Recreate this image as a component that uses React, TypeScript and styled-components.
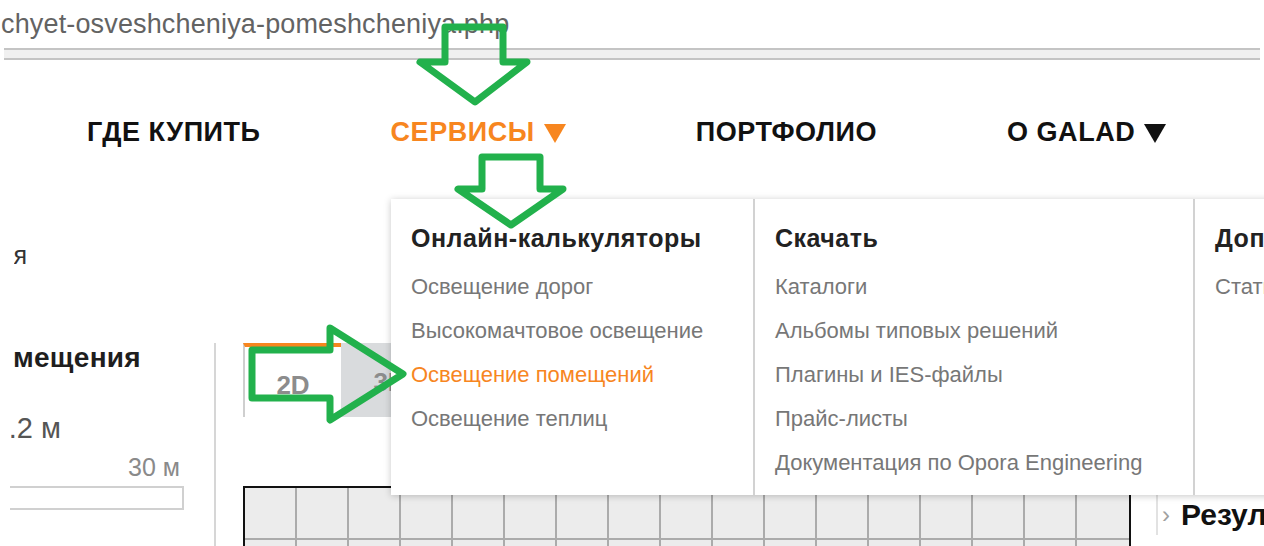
import React from "react";
import styled, { createGlobalStyle } from "styled-components";

const GlobalStyle = createGlobalStyle`
  html, body {
    margin: 0;
    padding: 0;
    background: #ffffff;
  }
  body {
    font-family: "Liberation Sans", Arial, sans-serif;
  }
  * { box-sizing: border-box; }
`;

const ORANGE = "#f7861f";
const GREEN = "#22b14c";

const Page = styled.div`
  position: relative;
  width: 1264px;
  height: 546px;
  overflow: hidden;
  background: #fff;
`;

/* ---------- address line + scroll rule ---------- */
const AddressLine = styled.div`
  height: 48px;
  padding-top: 8px;
  padding-left: 4px;
  white-space: nowrap;
  overflow: hidden;
`;

const AddressText = styled.span`
  display: block;
  font-size: 27px;
  letter-spacing: 0.15px;
  line-height: 32px;
  color: #636363;
  margin-left: -3px;
`;

const ScrollRule = styled.div`
  height: 12px;
  margin: 0 4px;
  background: #f0f0f0;
  border-top: 2px solid #c4c4c4;
  border-bottom: 2px solid #c4c4c4;
`;

/* ---------- main navigation ---------- */
const Nav = styled.nav`
  height: 144px;
  display: flex;
  align-items: center;
  gap: 130px;
  padding-left: 87px;
`;

const NavItem = styled.a<{ $active?: boolean }>`
  display: flex;
  align-items: center;
  gap: 9px;
  font-size: 27px;
  font-weight: 700;
  letter-spacing: 0.55px;
  line-height: 30px;
  color: ${(p) => (p.$active ? ORANGE : "#111")};
  text-decoration: none;
  white-space: nowrap;
`;

const Caret = styled.span<{ $color: string }>`
  display: inline-block;
  width: 0;
  height: 0;
  border-left: 11px solid transparent;
  border-right: 11px solid transparent;
  border-top: 19px solid ${(p) => p.$color};
  margin-top: 2px;
`;

/* ---------- page body; its left part is scrolled out of view ---------- */
const Crumb = styled.div`
  height: 139px;
  padding-top: 36px;
  display: flex;
`;

/* a line of which only the tail between x = left and x = right is seen */
const ClippedLine = styled.div<{ $left: number; $right: number }>`
  margin-left: ${(p) => p.$left}px;
  width: ${(p) => p.$right - p.$left}px;
  overflow: hidden;
  display: flex;
  justify-content: flex-end;
  white-space: nowrap;
`;

const CrumbText = styled.span`
  font-size: 25px;
  line-height: 30px;
  color: #333;
`;

const Main = styled.div`
  display: flex;
  align-items: flex-start;
`;

const Sidebar = styled.aside`
  width: 214px;
  flex: none;
  display: flex;
  flex-direction: column;
`;

const SideTitle = styled.span`
  font-size: 28px;
  font-weight: 700;
  letter-spacing: 0.3px;
  line-height: 30px;
  color: #1e1e1e;
`;

const FieldValue = styled.span`
  font-size: 29px;
  line-height: 30px;
  color: #555;
`;

const RangeMax = styled.div`
  width: 180px;
  text-align: right;
  font-size: 25px;
  line-height: 24px;
  color: #8a8a8a;
`;

const RangeTrack = styled.div`
  width: 174px;
  margin-left: 10px;
  height: 24px;
  border: 2px solid #d0d0d0;
  border-left: none;
  background: #fff;
`;

const Workspace = styled.section`
  width: 942px;
  flex: none;
  align-self: stretch;
  min-height: 220px;
  border-left: 2px solid #d6d6d6;
  padding-left: 27px;
  display: flex;
  flex-direction: column;
`;

const Tabs = styled.div`
  display: flex;
  height: 74px;
  flex: none;
`;

const Tab = styled.div<{ $active?: boolean }>`
  width: 98px;
  display: flex;
  align-items: center;
  justify-content: center;
  font-size: 26px;
  font-weight: 700;
  color: #8c8c8c;
  background: ${(p) => (p.$active ? "#fff" : "#d9dbdd")};
  border-top: 4px solid ${(p) => (p.$active ? ORANGE : "#d9dbdd")};
  border-left: ${(p) => (p.$active ? "2px solid #cfcfcf" : "none")};
  padding-top: ${(p) => (p.$active ? "6px" : "0")};
`;

const Grid = styled.div`
  flex: none;
  margin-top: 69px;
  display: grid;
  grid-template-columns: repeat(17, 52px);
  grid-auto-rows: 52px;
  width: max-content;
  border-top: 2px solid #111;
  border-left: 2px solid #111;
  border-right: 2px solid #111;
  background: #ececec;
`;

const Cell = styled.div<{ $last?: boolean }>`
  border-right: ${(p) => (p.$last ? "none" : "2px solid #ababab")};
  border-bottom: 2px solid #ababab;
`;

const Results = styled.section`
  margin-top: 152px;
  border-left: 2px solid #e2e2e2;
  padding-left: 4px;
  display: flex;
  align-items: center;
  gap: 11px;
  height: 40px;
  white-space: nowrap;
`;

const Chevron = styled.span`
  font-size: 24px;
  color: #a0a0a0;
  line-height: 30px;
`;

const ResultsTitle = styled.span`
  font-size: 30px;
  font-weight: 700;
  color: #111;
  line-height: 30px;
`;

/* ---------- services mega menu ---------- */
const MegaMenu = styled.div`
  position: absolute;
  left: 391px;
  top: 199px;
  width: 1000px;
  height: 296px;
  background: #fff;
  box-shadow: 0 1px 7px rgba(0, 0, 0, 0.22);
  display: flex;
`;

const MenuColumn = styled.div<{ $width: number; $divider?: boolean }>`
  width: ${(p) => p.$width}px;
  flex: none;
  padding: 24px 20px 0;
  border-right: ${(p) => (p.$divider ? "2px solid #d2d2d2" : "none")};
`;

const MenuHeading = styled.div`
  font-size: 25px;
  font-weight: 700;
  letter-spacing: 0.5px;
  line-height: 30px;
  color: #222;
  margin-bottom: 12px;
  white-space: nowrap;
`;

const MenuLink = styled.a<{ $current?: boolean }>`
  display: block;
  font-size: 22px;
  line-height: 44px;
  color: ${(p) => (p.$current ? ORANGE : "#777")};
  text-decoration: none;
  white-space: nowrap;
`;

/* ---------- hand-drawn pointer arrows ---------- */
const Pointers = styled.svg`
  position: absolute;
  left: 0;
  top: 0;
  pointer-events: none;
`;

const Arrow = styled.polygon`
  fill: none;
  stroke: ${GREEN};
  stroke-width: 7;
  stroke-linejoin: round;
`;

const menuColumns = [
  {
    title: "Онлайн-калькуляторы",
    width: 364,
    divider: true,
    links: [
      "Освещение дорог",
      "Высокомачтовое освещение",
      "Освещение помещений",
      "Освещение теплиц",
    ],
    current: 2,
  },
  {
    title: "Скачать",
    width: 440,
    divider: true,
    links: [
      "Каталоги",
      "Альбомы типовых решений",
      "Плагины и IES-файлы",
      "Прайс-листы",
      "Документация по Opora Engineering",
    ],
    current: -1,
  },
  {
    title: "Дополнительно",
    width: 196,
    divider: false,
    links: ["Статьи"],
    current: -1,
  },
];

export default function App() {
  return (
    <>
      <GlobalStyle />
      <Page>
        <AddressLine>
          <AddressText>chyet-osveshcheniya-pomeshcheniya.php</AddressText>
        </AddressLine>
        <ScrollRule />

        <Nav>
          <NavItem href="#">ГДЕ КУПИТЬ</NavItem>
          <NavItem href="#" $active>
            СЕРВИСЫ
            <Caret $color={ORANGE} />
          </NavItem>
          <NavItem href="#">ПОРТФОЛИО</NavItem>
          <NavItem href="#">
            О GALAD
            <Caret $color="#111" />
          </NavItem>
        </Nav>

        <Crumb>
          <ClippedLine $left={14} $right={27}>
            <CrumbText>Расчет освещения помещения</CrumbText>
          </ClippedLine>
        </Crumb>

        <Main>
          <Sidebar>
            <ClippedLine $left={14} $right={141}>
              <SideTitle>Параметры помещения</SideTitle>
            </ClippedLine>
            <ClippedLine $left={11} $right={61} style={{ marginTop: 40 }}>
              <FieldValue>Высота: 3.2 м</FieldValue>
            </ClippedLine>
            <RangeMax style={{ marginTop: 12 }}>30 м</RangeMax>
            <RangeTrack style={{ marginTop: 7 }} />
          </Sidebar>

          <Workspace>
            <Tabs>
              <Tab $active>2D</Tab>
              <Tab>3D</Tab>
            </Tabs>
            <Grid>
              {Array.from({ length: 17 * 3 }, (_, i) => (
                <Cell key={i} $last={i % 17 === 16} />
              ))}
            </Grid>
          </Workspace>

          <Results>
            <Chevron>›</Chevron>
            <ResultsTitle>Результаты</ResultsTitle>
          </Results>
        </Main>

        <MegaMenu>
          {menuColumns.map((col) => (
            <MenuColumn key={col.title} $width={col.width} $divider={col.divider}>
              <MenuHeading>{col.title}</MenuHeading>
              {col.links.map((label, i) => (
                <MenuLink key={label} href="#" $current={i === col.current}>
                  {label}
                </MenuLink>
              ))}
            </MenuColumn>
          ))}
        </MegaMenu>

        <Pointers width={1264} height={546} viewBox="0 0 1264 546">
          <Arrow points="445,27 503,27 503,62 527,62 475,102 420,62 445,62" />
          <Arrow points="482,157 540,157 540,189 563,189 511,225 458,189 482,189" />
          <Arrow points="252,350 330,350 330,328 403,374 330,420 330,398 252,398" />
        </Pointers>
      </Page>
    </>
  );
}
